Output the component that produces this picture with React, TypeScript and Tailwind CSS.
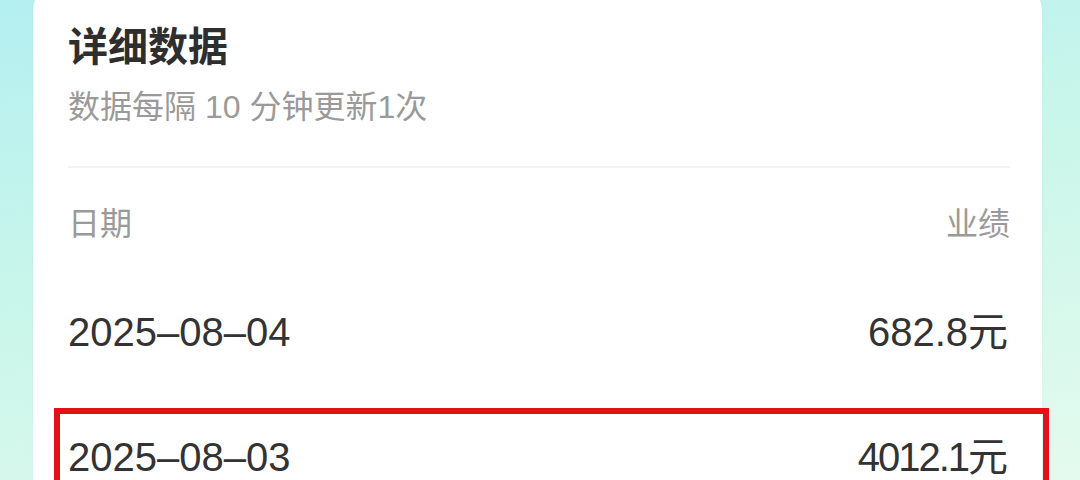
import React from "react";

const FONT = '"Liberation Sans", "Noto Sans CJK SC", sans-serif';

export default function App() {
  return (
    <div
      className="w-[1080px] h-[480px] overflow-hidden bg-[linear-gradient(170deg,#b4eff1_0%,#c9f6ea_45%,#e4faee_100%)]"
      style={{ fontFamily: FONT }}
    >
      <div className="ml-[33px] w-[1009px] -mt-[14px] h-[520px] bg-white rounded-[24px] shadow-[0_0_3px_rgba(0,0,0,0.04)] pl-[35px] pr-[32px] pt-[41px]">
        <div className="h-[40px] leading-[40px] text-[40px] font-bold text-[#2e2e2e]">
          详细数据
        </div>
        <div className="mt-[24px] h-[32px] leading-[32px] text-[32px] text-[#9a9a9a]">
          数据每隔 10 分钟更新1次
        </div>
        <div className="mt-[43px] h-[2px] bg-[#f3f3f3]" />
        <div className="mt-[40px] h-[32px] leading-[32px] text-[32px] text-[#9a9a9a] flex justify-between">
          <span>日期</span>
          <span>业绩</span>
        </div>
        <div className="mt-[72px] h-[40px] leading-[40px] text-[40px] text-[#333333] flex justify-between">
          <span>2025–08–04</span>
          <span className="mr-[2px]">682.8元</span>
        </div>
        <div className="relative mt-[85px] h-[40px] leading-[40px] text-[40px] text-[#333333] flex justify-between">
          <span>2025–08–03</span>
          <span className="tracking-[-2px] mr-[4px]">4012.1元</span>
          <div className="absolute left-[-14px] right-[-39px] top-[-29px] h-[200px] border-[6px] border-[#e50f17] pointer-events-none" />
        </div>
      </div>
    </div>
  );
}
